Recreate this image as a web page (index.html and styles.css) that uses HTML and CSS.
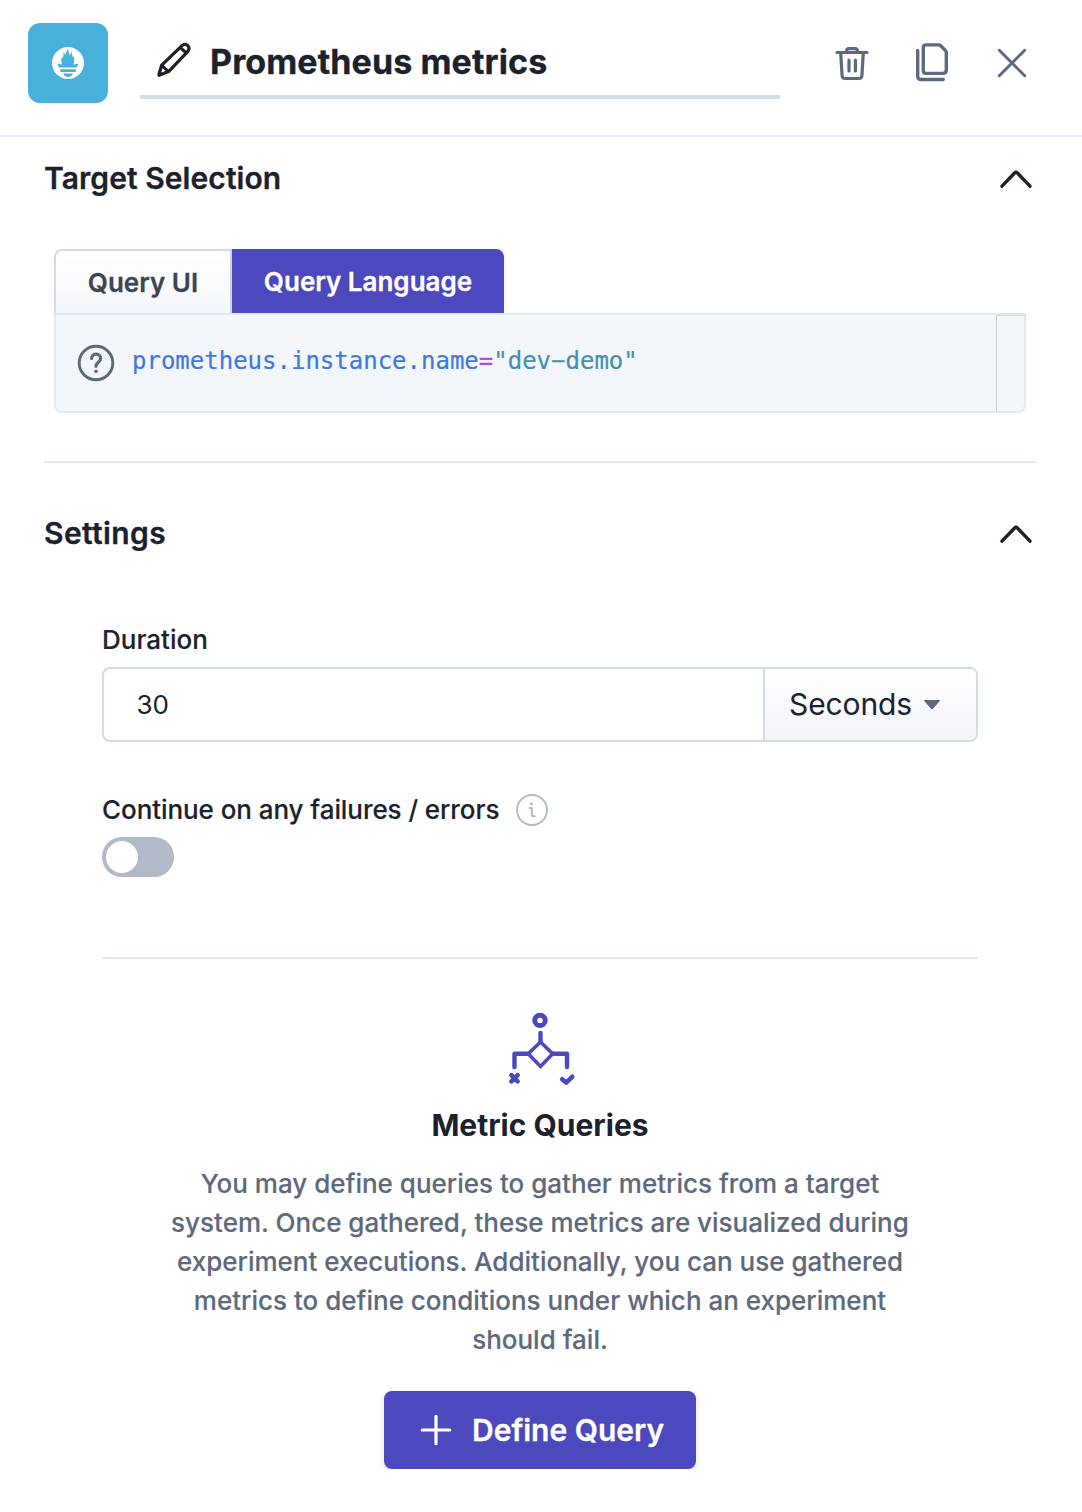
FILE: index.html
```html
<!DOCTYPE html>
<html lang="en">
<head>
<meta charset="utf-8">
<title>Prometheus metrics</title>
<link rel="stylesheet" href="styles.css">
</head>
<body>
<header class="header">
  <div class="logo">
    <svg width="32" height="32" viewBox="0 0 32 32"><circle cx="16" cy="16" r="16" fill="#fff"/><path fill="#48b0da" d="M5.600 16.800l5 .7C9 15 8.900 12.500 10.200 9.500c.2 1 .3 1.500.7 1.800.8-2 .4-4.200.8-6.500.8 1 1 2.200 1.300 3.400C14 6.500 14.600 4.500 15.600 1.800c.6 2 1.400 3.800 2.200 6.600.8-1.200 1-2.800 1.700-4.200.2 2.500.8 4.200 1.400 6.300.4-.5.6-1 .8-1.600.8 3.200.9 6-.4 8.600l5-.7c-.2 1.600-.8 2.600-1.600 3.600H7.200c-.8-1-1.400-2-1.600-3.600zM8.200 22.300h15.700v2.600H8.200zM11.300 26.500h9.500c-.5 2.200-2.500 3.600-4.750 3.600s-4.300-1.400-4.750-3.600z"/></svg>
  </div>
  <div class="name-field">
    <svg width="40" height="40" viewBox="0 0 40 40" fill="none" stroke="#1c222d" stroke-width="3.200" stroke-linejoin="round" stroke-linecap="round"><path d="M5 36.200l2.500-9.800L27.200 7.300c5.200-4.600 10.400.8 6 5.800L14.600 32.600zM7.500 26.400l7.100 6.200M26 8.500l6.500 5.500"/><path d="M4.300 36.800v-4.600l4.300 3.200z" fill="#1c222d" stroke-width="1"/></svg>
    <h1 class="title">Prometheus metrics</h1>
  </div>
  <div class="actions">
    <svg width="40" height="40" viewBox="0 0 40 40" fill="none" stroke="#5d6a7d" stroke-width="3.200" stroke-linecap="round" stroke-linejoin="round"><path d="M5 9.500h30M8.700 10l1.400 22.700q.2 2.800 3 2.800h13.800q2.800 0 3-2.800L31.300 10M14.700 9V7.500q0-1.900 2-1.900h6.600q2 0 2 1.900V9M17 17v11M23.400 17v11"/></svg>
    <svg width="40" height="40" viewBox="0 0 40 40" fill="none" stroke="#5d6a7d" stroke-width="3.400" stroke-linecap="round" stroke-linejoin="round"><path d="M14 1.900h12.700q1.200 0 2 .8l4.700 4.700q.9.900.9 2.200v17.400q0 3.400-3.400 3.400H14q-2.700 0-2.700-2.700V4.600q0-2.700 2.700-2.700z"/><path d="M5.700 7.500v25.800q0 3.200 3.200 3.200h22.400"/></svg>
    <svg width="40" height="40" viewBox="0 0 40 40" fill="none" stroke="#5d6a7d" stroke-width="3" stroke-linecap="round"><path d="M7.300 7.300l25.400 25.400M32.700 7.300L7.300 32.700"/></svg>
  </div>
</header>
<main class="main">
  <section class="target">
    <div class="section-head">
      <h2 class="heading target-heading">Target Selection</h2>
      <svg class="chevron" width="32" height="20" viewBox="0 0 32 20"><path d="M2 17.200L14.600 4q1.400-1.400 2.800 0L30 17.200"/></svg>
    </div>
    <div class="query">
      <div class="tabs">
        <button class="tab">Query UI</button>
        <button class="tab tab-active">Query Language</button>
      </div>
      <div class="editor">
        <svg class="help" width="38" height="38" viewBox="0 0 38 38" fill="none" stroke="#5d6a7d" stroke-linecap="round"><circle cx="19" cy="19" r="16.800" stroke-width="2.900"/><path d="M14.600 14.500c.3-6 9-5.700 9-.1 0 4-4.600 3.700-4.600 7.900" stroke-width="3.200"/><circle cx="19" cy="27.200" r="1.800" fill="#5d6a7d" stroke="none"/></svg>
        <code class="code"><span class="key">prometheus.instance.name</span><span class="op">=</span><span class="str">"dev&#8722;demo"</span></code>
        <div class="gutter"></div>
      </div>
    </div>
  </section>
  <section class="settings">
    <div class="section-head">
      <h2 class="heading settings-heading">Settings</h2>
      <svg class="chevron" width="32" height="20" viewBox="0 0 32 20"><path d="M2 17.200L14.600 4q1.400-1.400 2.800 0L30 17.200"/></svg>
    </div>
    <div class="form">
      <div class="label duration-label">Duration</div>
      <div class="duration">
        <div class="amount">30</div>
        <div class="unit"><span class="unit-text">Seconds</span><svg width="18" height="12" viewBox="0 0 18 12"><path d="M1.500 1h15q1 0 .3.900L10 9.800q-1 1-2 0L1.200 1.900Q.5 1 1.500 1z" fill="#5d6a7d"/></svg></div>
      </div>
      <div class="label-row">
        <div class="label continue-label">Continue on any failures / errors</div>
        <svg width="32" height="32" viewBox="0 0 32 32" fill="none" stroke="#b2b9c7"><circle cx="16" cy="16" r="15" stroke-width="1.900"/><path d="M13.600 14h2.200v6.500q0 1.800 1.700 1.800h1.300" stroke-width="1.900" stroke-linecap="round" stroke-linejoin="round"/><circle cx="15.400" cy="9.700" r="1.500" fill="#b2b9c7" stroke="none"/></svg>
      </div>
      <div class="toggle"><div class="knob"></div></div>
      <div class="metrics">
        <svg width="72" height="76" viewBox="0 0 72 76" fill="none" stroke="#4c48bd" stroke-width="4.400" stroke-linecap="round" stroke-linejoin="round"><circle cx="36" cy="10.400" r="5.200" stroke-width="5"/><path d="M36.500 23v9M24.500 43.700H10.500V57M48.500 43.700H63V57"/><path d="M36.500 32L48.700 43.700 36.500 56.400 24.300 43.700z" stroke-width="3.600" stroke-linejoin="miter"/><path d="M7.400 65.200l6.200 6.200M13.600 65.200l-6.200 6.200M58.200 69.200l4 3.400 6-5.800" stroke-width="4.600"/></svg>
        <h3 class="metrics-title">Metric Queries</h3>
        <p class="description">You may define queries to gather metrics from a target<br>system. Once gathered, these metrics are visualized during<br>experiment executions. Additionally, you can use gathered<br>metrics to define conditions under which an experiment<br>should fail.</p>
        <button class="define"><svg width="32" height="32" viewBox="0 0 32 32" stroke="#fff" stroke-width="3.200" stroke-linecap="round"><path d="M16 2.300v27.400M2.300 16h27.400"/></svg><span class="define-text">Define Query</span></button>
      </div>
    </div>
  </section>
</main>
</body>
</html>
```
FILE: styles.css
```css
* { box-sizing: border-box; }
body { margin: 0; background: #fff; color: #1c222d; font-family: Inter, "Liberation Sans", sans-serif; }
h1, h2, h3, p { margin: 0; }
button { font-family: inherit; border: 0; margin: 0; }
svg { display: block; flex: none; }
.header { height: 137px; border-bottom: 2px solid #e4e8f2; padding: 23px 50px 0 28px; display: flex; align-items: flex-start; }
.logo { width: 80px; height: 80px; border-radius: 12px; background: #48b0da; display: grid; place-items: center; }
.name-field { width: 640px; height: 76px; margin-left: 32px; padding: 0 0 2px 14px; border-bottom: 4px solid #d3dbe7; display: flex; align-items: center; gap: 16px; }
.title { font-size: 34px; line-height: 40px; font-weight: 700; letter-spacing: .1px; white-space: nowrap; padding-top: 8px; -webkit-text-stroke: .3px; }
.name-field svg { margin-top: 2px; }
.actions { display: flex; gap: 40px; margin: 20px 0 0 52px; }
.main { padding: 0 46px 0 44px; }
.section-head { display: flex; justify-content: space-between; align-items: center; height: 40px; padding-right: 4px; }
.heading { font-size: 30px; line-height: 40px; font-weight: 600; white-space: nowrap; padding-bottom: 2px; letter-spacing: .07px; -webkit-text-stroke: .3px; }
.settings-heading { letter-spacing: .38px; }
.chevron path { fill: none; stroke: #1c222d; stroke-width: 3.400; stroke-linecap: round; }
.target { height: 326px; padding-top: 22px; border-bottom: 2px solid #e4e8f2; }
.query { margin: 50px 10px 0; }
.tabs { display: flex; height: 64px; }
.tab { width: 178px; padding: 1px 0 0; font-size: 26px; font-weight: 600; color: #3b4554; background: linear-gradient(#fff, #f3f6fa); border: 2px solid #d3dbe7; border-bottom: 0; border-radius: 8px 0 0 0; white-space: nowrap; -webkit-text-stroke: .3px; }
.tab-active { width: 272px; color: #fff; background: #4c48bd; border: 0; border-radius: 0 8px 0 0; box-shadow: 0 1px 4px #00000018; }
.editor { position: relative; height: 100px; border: 2px solid #e4e8f2; border-radius: 0 0 8px 8px; background: #f3f6fb; display: flex; padding-left: 21px; }
.help { margin-top: 29px; }
.code { font: 24px/30px "DejaVu Sans Mono", monospace; letter-spacing: 0; margin: 31px 0 0 17px; white-space: nowrap; -webkit-text-stroke: .2px; }
.key { color: #4078e0; }
.op { color: #b14be8; }
.str { color: #488eae; }
.gutter { width: 28px; margin-left: auto; border-left: 1px solid #c9cdd2; border-top: 1px solid #dadee5; }
.settings { padding-top: 51px; }
.form { padding: 0 58px; margin: 65px -2px 0 0; width: 992px; }
.label { font-size: 26px; line-height: 32px; font-weight: 500; white-space: nowrap; -webkit-text-stroke: .15px; }
.duration-label { height: 48px; padding-top: 5px; }
.duration { height: 75px; display: flex; border: 2px solid #d3dbe7; border-radius: 8px; overflow: hidden; }
.amount { flex: 1; padding-left: 32.5px; font-size: 26px; line-height: 71px; }
.unit { width: 213px; border-left: 2px solid #d3dbe7; padding-left: 24px; display: flex; align-items: center; gap: 11px; font-size: 30px; background: linear-gradient(#fff, #f2f5fa); }
.unit-text { padding-bottom: 2px; letter-spacing: -.1px; }
.label-row { display: flex; align-items: center; gap: 16px; margin-top: 52px; height: 32px; }
.continue-label { width: 398px; letter-spacing: -.07px; }
.toggle { width: 72px; height: 40px; border-radius: 20px; background: #b2b9c7; margin-top: 11px; padding: 4px; }
.knob { width: 32px; height: 32px; border-radius: 50%; background: #fff; }
.metrics { margin-top: 80px; border-top: 2px solid #e4e8f2; padding-top: 51px; display: flex; flex-direction: column; align-items: center; }
.metrics-title { margin-top: 20px; font-size: 30px; line-height: 38px; font-weight: 700; white-space: nowrap; }
.description { margin-top: 20px; font-size: 26px; line-height: 39px; font-weight: 500; color: #5d6a7d; text-align: center; white-space: nowrap; -webkit-text-stroke: .15px; }
.define { width: 312px; height: 78px; margin-top: 32px; border-radius: 8px; padding: 0 0 0 36px; display: flex; align-items: center; gap: 20px; background: #4c48bd; color: #fff; font-size: 30px; font-weight: 600; box-shadow: 0 2px 6px #1c222d20; white-space: nowrap; }
.define-text { -webkit-text-stroke: .3px; }
```
